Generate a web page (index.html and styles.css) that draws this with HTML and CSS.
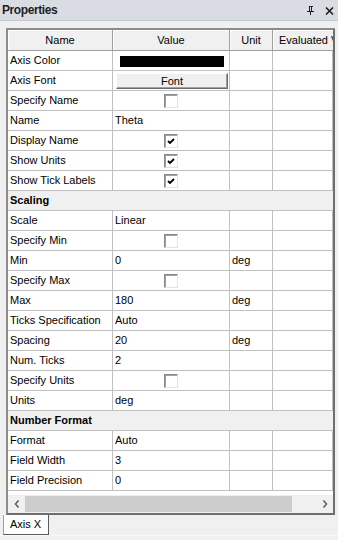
FILE: index.html
```html
<!DOCTYPE html>
<html>
<head>
<meta charset="utf-8">
<link rel="stylesheet" href="styles.css">
</head>
<body>
<div class="titlebar">
  <span class="title">Properties</span>
  <span class="tbicons">
    <svg class="pin" width="8" height="9" viewBox="0 0 8 9"><path d="M2 0h4v1H5v4h2v1H4v3H3V6H0V5h2V1H2z M3 1v4h1V1z" fill="#1e1e1e"/></svg>
    <svg class="close" width="9" height="8" viewBox="0 0 9 8"><path d="M1 0.5L8 7.5M8 0.5L1 7.5" stroke="#1e1e1e" stroke-width="1.6"/></svg>
  </span>
</div>
<div class="panel">
  <div class="gridbox">
    <div class="grid">
      <div class="row head"><div class="c">Name</div><div class="c">Value</div><div class="c">Unit</div><div class="c ev">Evaluated V</div></div>
      <div class="row"><div class="c">Axis Color</div><div class="c"><span class="swatch"></span></div><div class="c"></div><div class="c"></div></div>
      <div class="row"><div class="c">Axis Font</div><div class="c"><span class="btn">Font</span></div><div class="c"></div><div class="c"></div></div>
      <div class="row"><div class="c">Specify Name</div><div class="c cb"><span class="chk"></span></div><div class="c"></div><div class="c"></div></div>
      <div class="row"><div class="c">Name</div><div class="c">Theta</div><div class="c"></div><div class="c"></div></div>
      <div class="row"><div class="c">Display Name</div><div class="c cb"><span class="chk on"><svg width="8" height="7" viewBox="0 0 8 7"><path d="M1 3l2 2 4-4" stroke="#000" stroke-width="1.8" fill="none"/></svg></span></div><div class="c"></div><div class="c"></div></div>
      <div class="row"><div class="c">Show Units</div><div class="c cb"><span class="chk on"><svg width="8" height="7" viewBox="0 0 8 7"><path d="M1 3l2 2 4-4" stroke="#000" stroke-width="1.8" fill="none"/></svg></span></div><div class="c"></div><div class="c"></div></div>
      <div class="row"><div class="c">Show Tick Labels</div><div class="c cb"><span class="chk on"><svg width="8" height="7" viewBox="0 0 8 7"><path d="M1 3l2 2 4-4" stroke="#000" stroke-width="1.8" fill="none"/></svg></span></div><div class="c"></div><div class="c"></div></div>
      <div class="row cat"><div class="c">Scaling</div></div>
      <div class="row"><div class="c">Scale</div><div class="c">Linear</div><div class="c"></div><div class="c"></div></div>
      <div class="row"><div class="c">Specify Min</div><div class="c cb"><span class="chk"></span></div><div class="c"></div><div class="c"></div></div>
      <div class="row"><div class="c">Min</div><div class="c">0</div><div class="c">deg</div><div class="c"></div></div>
      <div class="row"><div class="c">Specify Max</div><div class="c cb"><span class="chk"></span></div><div class="c"></div><div class="c"></div></div>
      <div class="row"><div class="c">Max</div><div class="c">180</div><div class="c">deg</div><div class="c"></div></div>
      <div class="row"><div class="c">Ticks Specification</div><div class="c">Auto</div><div class="c"></div><div class="c"></div></div>
      <div class="row"><div class="c">Spacing</div><div class="c">20</div><div class="c">deg</div><div class="c"></div></div>
      <div class="row"><div class="c">Num. Ticks</div><div class="c">2</div><div class="c"></div><div class="c"></div></div>
      <div class="row"><div class="c">Specify Units</div><div class="c cb"><span class="chk"></span></div><div class="c"></div><div class="c"></div></div>
      <div class="row"><div class="c">Units</div><div class="c">deg</div><div class="c"></div><div class="c"></div></div>
      <div class="row cat"><div class="c">Number Format</div></div>
      <div class="row"><div class="c">Format</div><div class="c">Auto</div><div class="c"></div><div class="c"></div></div>
      <div class="row"><div class="c">Field Width</div><div class="c">3</div><div class="c"></div><div class="c"></div></div>
      <div class="row"><div class="c">Field Precision</div><div class="c">0</div><div class="c"></div><div class="c"></div></div>
      <div class="filler"></div>
    </div>
    <div class="hscroll">
      <span class="arr"><svg width="6" height="8" viewBox="0 0 6 8"><path d="M4.5 0.5L1.5 4l3 3.5" stroke="#606060" stroke-width="1.6" fill="none"/></svg></span>
      <span class="thumb"></span>
      <span class="arr"><svg width="6" height="8" viewBox="0 0 6 8"><path d="M1.5 0.5L4.5 4l-3 3.5" stroke="#606060" stroke-width="1.6" fill="none"/></svg></span>
    </div>
  </div>
  <div class="tabs"><span class="tab">Axis X</span></div>
</div>
</body>
</html>
```
FILE: styles.css
```css
html, body {
  margin: 0;
  padding: 0;
}
body {
  width: 338px;
  height: 540px;
  overflow: hidden;
  background: #f0f0f0;
  font-family: "Liberation Sans", Arial, sans-serif;
  font-size: 11px;
  color: #000;
}
.titlebar {
  height: 20px;
  background: #d9dde3;
  border-bottom: 1px solid #c3c7cd;
  display: flex;
  align-items: center;
  justify-content: space-between;
  padding: 0 4px 0 2px;
}
.title {
  font-size: 12px;
  font-weight: bold;
  color: #1e1e1e;
  letter-spacing: -0.4px;
}
.tbicons {
  display: flex;
  align-items: center;
  gap: 10px;
  padding-top: 1px;
}
.panel {
  padding-top: 7px;
}
.gridbox {
  margin-left: 6px;
  width: 325px;
  border: 2px solid #6e6e6e;
  border-top-color: #8c8c8c;
  border-left-color: #8c8c8c;
  background: #fff;
}
.grid {
  overflow: hidden;
  width: 325px;
}
.row {
  display: grid;
  grid-template-columns: 105px 117px 43px 60px;
  height: 20px;
}
.c {
  border-right: 1px solid #c0c0c0;
  border-bottom: 1px solid #c0c0c0;
  padding-left: 2px;
  line-height: 19px;
  white-space: nowrap;
  overflow: hidden;
}
.row.head {
  height: 21px;
}
.head .c {
  background: #f0f0f0;
  border-right: 1px solid #a0a0a0;
  border-bottom: 1px solid #a0a0a0;
  box-shadow: inset 1px 1px #fff;
  text-align: center;
  padding-left: 0;
  line-height: 20px;
}
.head .c.ev {
  text-align: left;
  padding-left: 6px;
  border-right: none;
}
.cat {
  display: block;
}
.cat .c {
  background: #f0f0f0;
  font-weight: bold;
  border-right: none;
}
.cb {
  display: flex;
  align-items: center;
  justify-content: center;
  padding-left: 0;
}
.chk {
  background: #fff;
  border: 1px solid;
  border-color: #8a8a8a #e3e3e3 #e3e3e3 #8a8a8a;
  box-shadow: inset 1px 1px #a0a0a0;
  display: flex;
  padding: 3px 0 0 2px;
  box-sizing: content-box;
  width: 10px;
  height: 9px;
}
.chk svg {
  display: block;
}
.swatch {
  display: block;
  margin: 5px 0 0 5px;
  width: 104px;
  height: 11px;
  background: #000;
}
.btn {
  display: block;
  margin: 2px 0 0 1px;
  width: 110px;
  height: 14px;
  background: #f0f0f0;
  border: 1px solid;
  border-color: #fff #6a6a6a #6a6a6a #fff;
  box-shadow: inset -1px -1px #a0a0a0;
  text-align: center;
  line-height: 14px;
}
.filler {
  height: 4px;
}
.hscroll {
  height: 18px;
  background: #f0f0f0;
  display: flex;
  align-items: center;
}
.arr {
  width: 17px;
  display: flex;
  justify-content: center;
}
.thumb {
  flex: 1;
  height: 16px;
  background: #cdcdcd;
  margin-right: 24px;
}
.tabs {
  padding-left: 3px;
  height: 20px;
  border-bottom: 1px solid #fafafa;
}
.tab {
  display: inline-block;
  width: 38px;
  height: 19px;
  background: #fcfcfc;
  border-left: 1px solid #a0a0a0;
  border-right: 1px solid #5a5a5a;
  border-bottom: 1px solid #5a5a5a;
  padding-left: 6px;
  line-height: 18px;
  font-size: 11px;
}
```
